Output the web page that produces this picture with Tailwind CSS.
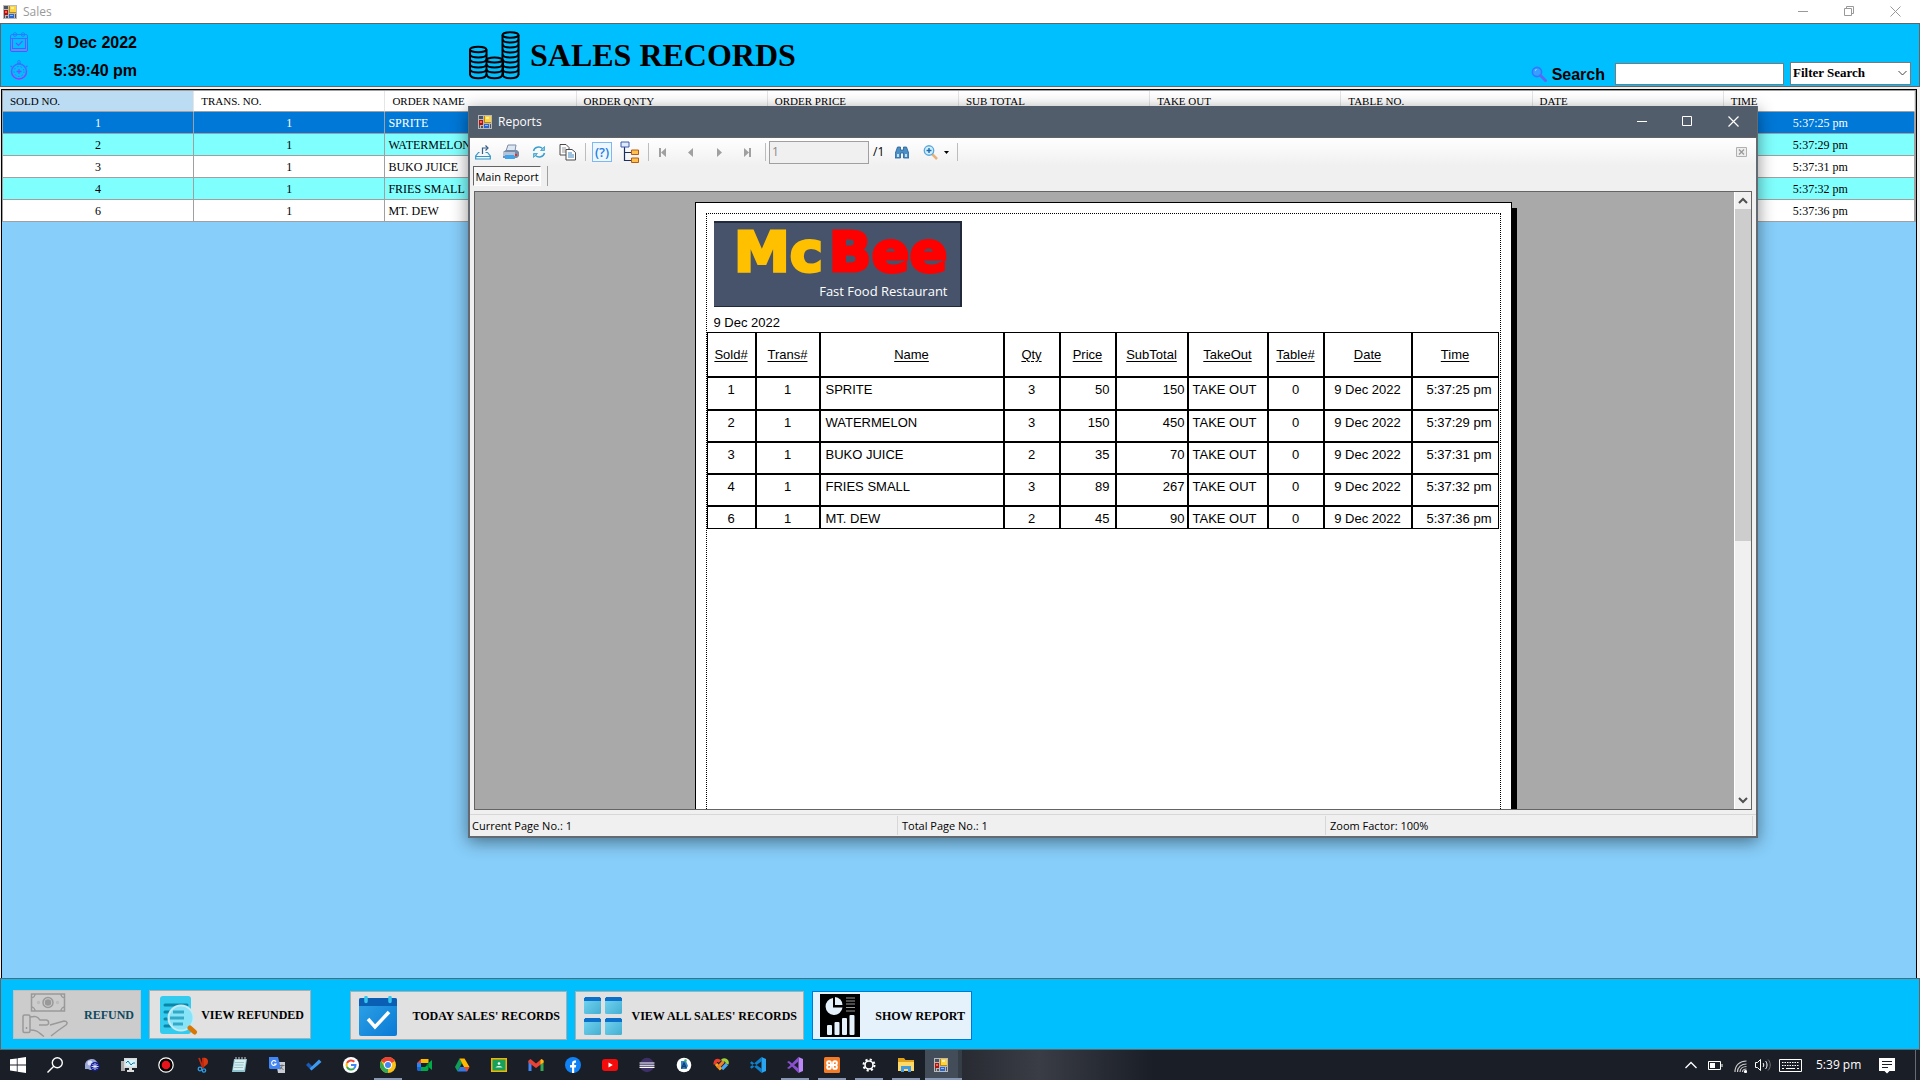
<!DOCTYPE html>
<html lang="en">
<head>
<meta charset="utf-8">
<title>Sales</title>
<script src="https://cdn.jsdelivr.net/npm/@tailwindcss/browser@4"></script>
</head>
<body class="relative flex h-screen flex-col overflow-hidden bg-[#f0f0f0] font-['Open_Sans',sans-serif] text-black">

<svg class="hidden" aria-hidden="true">
  <symbol id="form-icon" viewBox="0 0 14 14">
    <path d="M0 0h14v14H0z" fill="#b9b9b9"/>
    <path d="M1 1h4v3H1zM1 10h1v3H1zM3 11h2v2H3zM12 9h1v4h-1z" fill="#4c5462"/>
    <path d="M6 1h7v7H6z" fill="#b88a0c"/><path d="M7 1h6v6H7z" fill="#ffd33e"/><path d="M8 2h3v2H8z" fill="#fff0a8"/>
    <path d="M1 5h4v5H1z" fill="#b3130c"/><path d="M2 6h2v2H2z" fill="#f0685b"/>
    <path d="M6 9h5v4H6z" fill="#2b66d0"/><path d="M7 10h3v1H7z" fill="#8db9ff"/>
  </symbol>
</svg>

<!-- Window title bar -->
<div class="flex h-[23px] shrink-0 items-center bg-white pl-[3px] pr-0.5">
  <svg class="size-3.5"><use href="#form-icon"/></svg>
  <span class="flex-1 pl-1.5 text-[12px] leading-4 text-[#999]">Sales</span>
  <div class="flex text-[#999]">
    <button class="flex w-[46px] justify-center" aria-label="Minimize"><svg class="size-[11px]" fill="none" stroke="currentColor"><path d="M0 5.5h10"/></svg></button>
    <button class="flex w-[46px] justify-center" aria-label="Restore"><svg class="size-[11px]" fill="none" stroke="currentColor"><path d="M.5 2.500h7v7h-7zM2.500 2.500v-2h7v7h-2"/></svg></button>
    <button class="flex w-[46px] justify-center" aria-label="Close"><svg class="size-[11px]" fill="none" stroke="currentColor"><path d="M.5.5l10 10M10.500.5l-10 10"/></svg></button>
  </div>
</div>

<!-- Header -->
<header class="flex h-16 shrink-0 border border-[#646464] bg-[#00bfff]">
  <div class="grid w-[136px] shrink-0 grid-cols-[18px_1fr] grid-rows-[22px_20px] content-start gap-y-1.5 pl-[9px] pt-2 font-['Liberation_Sans',sans-serif] text-[16px] font-bold leading-[22px]">
    <svg class="h-5 w-[18px]" viewBox="0 0 18 20" fill="none"><defs><linearGradient id="g1" gradientUnits="userSpaceOnUse" x1="0" y1="0" x2="0" y2="20"><stop stop-color="#1a86ff"/><stop offset="1" stop-color="#9a33ff"/></linearGradient></defs><g stroke="url(#g1)"><rect x=".5" y="2.500" width="17" height="17" rx="1.500"/><path d="M1 6.500h16M2 16.500h14"/><rect x="2.500" y="6.500" width="13" height="10"/><circle cx="5" cy="2.500" r="1.800"/><circle cx="13" cy="2.500" r="1.800"/><path d="M6 11l2.500 2.500L12.500 9" stroke-width="1.200"/></g></svg>
    <span class="text-right">9 Dec 2022</span>
    <svg class="h-5 w-[18px]" viewBox="0 0 18 20" fill="none"><g stroke="url(#g1)"><circle cx="9" cy="11.500" r="7.500" stroke-width="1.500"/><circle cx="9" cy="11.500" r="5" stroke-dasharray="1.500 2"/><circle cx="9" cy="1.800" r="1.300"/><path d="M7 3.500h4M9 9v5M6.500 11.500h5M16 7l1.500-1.200M2 7L.5 5.800" stroke-width="1.300"/></g></svg>
    <span class="text-right">5:39:40 pm</span>
  </div>
  <div class="flex items-start pl-[332px] pt-[7px]">
    <svg class="h-[49px] w-[51px]" viewBox="0 0 51 49" fill="none" stroke="#000" stroke-width="2">
      <path d="M1 18.500v25.500M17.500 18.500V44M17.500 29V44M34 29V44M33.500 4v40M49.500 4v40"/>
      <ellipse cx="9.200" cy="18.500" rx="8.200" ry="2.800"/><path d="M1 23.500c1 4 15.500 4 16.500 0M1 28.500c1 4 15.500 4 16.500 0M1 33.500c1 4 15.500 4 16.500 0M1 38.500c1 4 15.500 4 16.500 0M1 43.500c1 5 15.500 5 16.500 0"/>
      <ellipse cx="25.500" cy="29" rx="8" ry="2.500"/><path d="M17.500 33.500c1 4 15 4 16 0M17.500 38.500c1 4 15 4 16 0M17.500 43.500c1 5 15 5 16 0"/>
      <ellipse cx="41.500" cy="4" rx="8" ry="2.800"/><path d="M33.500 8.500c1 4 15 4 16 0M33.500 13.500c1 4 15 4 16 0M33.500 18.500c1 4 15 4 16 0M33.500 23.500c1 4 15 4 16 0M33.500 28.500c1 4 15 4 16 0M33.500 33.500c1 4 15 4 16 0M33.500 38.500c1 4 15 4 16 0M33.500 43.500c1 5 15 5 16 0"/>
    </svg>
    <h1 class="whitespace-nowrap pl-2.5 pt-1 font-['Liberation_Serif',serif] text-[32px] font-bold leading-10">SALES RECORDS</h1>
  </div>
  <div class="ml-auto flex items-end pb-px pr-2">
    <svg class="mb-[3px] mr-[5px] size-4" viewBox="0 0 16 16" fill="none"><circle cx="6" cy="6" r="4.600" fill="#35a0ff" stroke="#2f78ff" stroke-width="1.600"/><path d="M4 4.500l1.500-1" stroke="#bfe6ff"/><path d="M9.500 9.500l5 5" stroke="#5a68f5" stroke-width="3" stroke-linecap="round"/></svg>
    <label for="search" class="mr-2.5 font-['Liberation_Sans',sans-serif] text-[16px] font-bold leading-5">Search</label>
    <input id="search" type="text" class="mr-1.5 h-[22px] w-[169px] border border-[#7a7a7a] bg-white px-1 text-xs">
    <div class="relative">
      <select aria-label="Filter Search" class="block h-[23px] w-[121px] appearance-none border border-[#7a7a7a] bg-white pb-0.5 pl-0.5 font-['Liberation_Serif',serif] text-[13px] font-bold leading-4"><option>Filter Search</option></select>
      <svg class="pointer-events-none absolute right-1 top-2 h-[7px] w-[9px]" fill="none" stroke="#444"><path d="M.5 1l4 4 4-4"/></svg>
    </div>
  </div>
</header>

<!-- Sales grid -->
<main class="ml-px mr-[3px] mt-0.5 flex-1 border-x border-t border-black bg-[#87cefa]">
  <table class="w-full table-fixed border-separate border-spacing-0 whitespace-nowrap border border-b-0 border-[#a0a0a0] font-['Liberation_Serif',serif] text-[12px] leading-4 [&_td]:h-[22px] [&_td]:border-b [&_td]:border-r [&_td]:border-[#a0a0a0] [&_td]:p-0 [&_td]:pl-[3px] [&_td:nth-child(-n+2)]:pl-0 [&_td:nth-child(-n+2)]:text-center [&_td:last-child]:text-center [&_th]:h-[21px] [&_th]:border-b [&_th]:border-r [&_th]:border-b-[#a0a0a0] [&_th]:border-r-[#e5e5e5] [&_th]:p-0 [&_th]:pl-[7px] [&_th]:text-left [&_th]:text-[11px] [&_th]:font-normal">
    <thead><tr class="bg-white"><th class="bg-[#bcdcf4]">SOLD NO.</th><th>TRANS. NO.</th><th>ORDER NAME</th><th>ORDER QNTY</th><th>ORDER PRICE</th><th>SUB TOTAL</th><th>TAKE OUT</th><th>TABLE NO.</th><th>DATE</th><th>TIME</th></tr></thead>
    <tbody>
      <tr class="bg-[#0078d7] text-white"><td>1</td><td>1</td><td>SPRITE</td><td>3</td><td>50</td><td>150</td><td>TAKE OUT</td><td>0</td><td>9 Dec 2022</td><td>5:37:25 pm</td></tr>
      <tr class="bg-[#80ffff]"><td>2</td><td>1</td><td>WATERMELON</td><td>3</td><td>150</td><td>450</td><td>TAKE OUT</td><td>0</td><td>9 Dec 2022</td><td>5:37:29 pm</td></tr>
      <tr class="bg-white"><td>3</td><td>1</td><td>BUKO JUICE</td><td>2</td><td>35</td><td>70</td><td>TAKE OUT</td><td>0</td><td>9 Dec 2022</td><td>5:37:31 pm</td></tr>
      <tr class="bg-[#80ffff]"><td>4</td><td>1</td><td>FRIES SMALL</td><td>3</td><td>89</td><td>267</td><td>TAKE OUT</td><td>0</td><td>9 Dec 2022</td><td>5:37:32 pm</td></tr>
      <tr class="bg-white"><td>6</td><td>1</td><td>MT. DEW</td><td>2</td><td>45</td><td>90</td><td>TAKE OUT</td><td>0</td><td>9 Dec 2022</td><td>5:37:36 pm</td></tr>
    </tbody>
  </table>
</main>

<!-- Action buttons -->
<footer class="flex h-[72px] shrink-0 items-start border border-[#646464] bg-[#00bfff] pl-3 pt-[11px] font-['Liberation_Serif',serif] text-[12px] font-bold leading-4">
  <button disabled class="mr-2 flex h-[49px] w-32 items-center justify-between border border-[#bfbfbf] bg-[#ccc] pl-2 pr-1.5 text-[#0d4a60]">
    <svg class="h-11 w-[46px]" viewBox="0 0 46 44" fill="none" stroke="#999" stroke-width="1.500"><path d="M9.500 1h33v17h-33zM9 5a4 4 0 004-4M43 5a4 4 0 01-4-4M9 14a4 4 0 014 4M43 14a4 4 0 00-4 4" /><circle cx="26" cy="9.500" r="5"/><circle cx="26" cy="9.500" r="2.500" fill="#999"/><circle cx="16.500" cy="9.500" r="1" fill="#bbb" stroke="#bbb"/><circle cx="35.500" cy="9.500" r="1" fill="#bbb" stroke="#bbb"/><rect x="1" y="22" width="7" height="17.500" rx="1.500"/><path d="M4.500 34v2M8 24c5-1 7-1 10 3h6c3 0 4 5 0 5h-7M28 32l14-4c3 0 4 2 2 4-6 4-10 7-15 11M8 37c8 0 9 3 14 6.500"/></svg>
    <span>REFUND</span>
  </button>
  <button class="mr-[39px] flex h-[49px] w-[162px] items-center justify-between border border-[#adadad] bg-[#e1e1e1] pl-2.5 pr-1.5">
    <svg class="h-11 w-[38px]" viewBox="0 0 38 44"><path d="M3 3h25a3 3 0 013 3v32a3 3 0 01-3 3H3a3 3 0 01-3-3V6a3 3 0 013-3z" fill="#33cbee"/><path d="M5 12h22M5 19h20M5 26h16M5 33h14" stroke="#0b86a8" stroke-width="3" stroke-linecap="round"/><circle cx="21" cy="25" r="12.500" fill="#86e3f8" stroke="#c7eaf3" stroke-width="2"/><path d="M13 19h11M10 25h14M13 31h10" stroke="#33a9c6" stroke-width="3"/><path d="M30 35l4.500 4" stroke="#d97706" stroke-width="5" stroke-linecap="round"/></svg>
    <span>VIEW REFUNDED</span>
  </button>
  <button class="mr-2 mt-px flex h-[49px] w-[217px] items-center justify-between border border-[#adadad] bg-[#e1e1e1] pl-2 pr-1.5">
    <svg class="h-10 w-[38px]" viewBox="0 0 38 40"><defs><linearGradient id="g2" x2="1" y2="1"><stop stop-color="#2ea3e6"/><stop offset="1" stop-color="#0a7ad6"/></linearGradient></defs><rect y="2" width="38" height="38" rx="2" fill="url(#g2)"/><path d="M0 10V4a2 2 0 012-2h34a2 2 0 012 2v6z" fill="#0a5fb5"/><path d="M7 1.500v4M31 1.500v4" stroke="#35c6ee" stroke-width="3.500" stroke-linecap="round"/><path d="M9 23l7 8 14-15" fill="none" stroke="#fff" stroke-width="3.500"/></svg>
    <span>TODAY SALES' RECORDS</span>
  </button>
  <button class="mr-2 mt-px flex h-[49px] w-[229px] items-center justify-between border border-[#adadad] bg-[#e1e1e1] pl-2 pr-1.5">
    <svg class="size-[38px]" viewBox="0 0 38 38"><defs><linearGradient id="g3" x2="1" y2="1"><stop stop-color="#74d6f2"/><stop offset="1" stop-color="#44aed2"/></linearGradient></defs><g fill="url(#g3)"><rect width="17" height="17" rx="1.500"/><rect x="21" width="17" height="17" rx="1.500"/><rect y="21" width="17" height="17" rx="1.500"/><rect x="21" y="21" width="17" height="17" rx="1.500"/></g><path d="M0 4V1h1V0h15v1h1v3zM21 4V1h1V0h15v1h1v3zM0 25v-3h1v-1h15v1h1v3zM21 25v-3h1v-1h15v1h1v3z" fill="#0b70c9"/></svg>
    <span>VIEW ALL SALES' RECORDS</span>
  </button>
  <button class="mt-px flex h-[49px] w-40 items-center justify-between border border-[#0078d7] bg-[#e5f1fb] pl-[7px] pr-1.5">
    <svg class="h-[43px] w-10" viewBox="0 0 40 43"><path d="M0 0h40v43H0z"/><path d="M13 4a8.500 8.500 0 109.500 9.500H13z" fill="#e5f1fb"/><path d="M15 3a8 8 0 017.500 8H15z" fill="#e5f1fb"/><path d="M26 4h9M26 7h9M26 10h9M26 13.500h9M26 17h9" stroke="#999" stroke-width="1"/><rect x="7" y="31" width="5" height="10" rx="1" fill="#e5f1fb"/><rect x="14.500" y="28" width="5" height="13" rx="1" fill="#e5f1fb"/><rect x="22" y="24" width="5" height="17" rx="1" fill="#e5f1fb"/><rect x="29.500" y="21" width="5" height="20" rx="1" fill="#e5f1fb"/></svg>
    <span>SHOW REPORT</span>
  </button>
</footer>

<!-- Taskbar -->
<nav class="flex h-[30px] shrink-0 items-stretch bg-[#1a1e27] text-white [&_button]:flex [&_button]:w-[37px] [&_button]:items-center [&_button]:justify-center [&_button]:pr-0.5 [&_svg]:block">
  <button aria-label="Start"><svg class="size-4" viewBox="0 0 16 16" fill="#fff"><path d="M0 2.300l6.800-.9v6.100H0zM7.600 1.300L16 .1v7.400H7.600zM0 8.400h6.800v6.100L0 13.600zM7.600 8.400H16v7.500l-8.400-1.200z"/></svg></button>
  <button aria-label="Search"><svg class="size-4" viewBox="0 0 16 16" fill="none" stroke="#fff" stroke-width="1.400"><circle cx="10.300" cy="5.700" r="5"/><path d="M6.800 9.200L.5 15.500"/></svg></button>
  <button aria-label="Paint"><svg class="size-4" viewBox="0 0 16 16"><path d="M1 8c0-4 4-6 7-6s5 2 6 5v6H6L4 12H1z" fill="#9aa7d8"/><circle cx="6" cy="6" r="2.500" fill="#dfe5fb"/><circle cx="11" cy="9.500" r="4.500" fill="#16209a"/><path d="M11 6v7M7.500 9.500h7M8.500 7l5 5M13.500 7l-5 5" stroke="#e8edff" stroke-width=".9"/></svg></button>
  <button aria-label="Monitor"><svg class="size-4" viewBox="0 0 16 16"><path d="M0 4h4v10H0z" fill="#aaa"/><path d="M3 1h13v10H3z" fill="#d9d9d9"/><path d="M4.500 2.500h10v7h-10z" fill="#d8f4fb"/><path d="M5 6l2-2 3 4 2-2h2" stroke="#1476a8" fill="none"/><path d="M8 11h3v2h2v2H6v-2h2z" fill="#ddd"/></svg></button>
  <button aria-label="Recorder"><svg class="size-4" viewBox="0 0 16 16"><circle cx="8" cy="8" r="7.200" fill="#000" stroke="#fff" stroke-width="1.200"/><circle cx="8" cy="8" r="4.300" fill="#e8131b"/></svg></button>
  <button aria-label="Snipping Tool"><svg class="size-4" viewBox="0 0 16 16" fill="none"><path d="M7 1c5-1 7 2 5.500 6L9 10z" fill="#d63a12"/><path d="M4 1l4 10M8 1v10" stroke="#c8280e" stroke-width="1.800"/><circle cx="5" cy="12" r="1.800" stroke="#2b9be0" stroke-width="1.300"/><circle cx="9" cy="13.500" r="1.700" stroke="#2b9be0" stroke-width="1.300"/></svg></button>
  <button aria-label="Notepad"><svg class="size-4" viewBox="0 0 16 16"><path d="M2 2h13l-2 13H0z" fill="#8fc3cf"/><path d="M3 3h11l-2 10H1z" fill="#d4eff2"/><path d="M3 5.500h9M2.500 8h9M2 10.500h9" stroke="#8fb6bd" stroke-width=".8"/><path d="M4 0v3M7 0v3M10 0v3M13 0v3" stroke="#ccc"/></svg></button>
  <button aria-label="Translate"><svg class="size-4" viewBox="0 0 16 16"><path d="M7 5h9v11H9z" fill="#c9ccd1"/><path d="M0 0h9l3 12H1L0 11z" fill="#4285f4"/><path d="M7 4.600A2.400 2.400 0 107.200 7H5" fill="none" stroke="#fff" stroke-width="1.100"/><path d="M10.500 8.500h5M13 7.500v1c0 2-1 3-2 4M11.500 10l3 3" stroke="#63666b" fill="none" stroke-width=".9"/></svg></button>
  <button aria-label="To Do"><svg class="size-4" viewBox="0 0 16 16"><path d="M0 8l2.500-2.500L7.500 10.500 5.500 13.500z" fill="#195ab6"/><path d="M5.500 13.500L3.700 11.500 13 2.500 15.500 5z" fill="#3e9af0"/></svg></button>
  <button aria-label="Google"><svg class="size-4" viewBox="0 0 16 16" fill="none" stroke-width="2"><circle cx="8" cy="8" r="8" fill="#fff"/><path d="M4 6a4.500 4.500 0 017.300-1.200" stroke="#ea4335"/><path d="M4 10a4.500 4.500 0 010-4" stroke="#fbbc05"/><path d="M4 10a4.500 4.500 0 007 1.500" stroke="#34a853"/><path d="M11 11.500A4.500 4.500 0 0012.500 8H8" stroke="#4285f4"/></svg></button>
  <button aria-label="Chrome" class="relative"><svg class="size-4" viewBox="0 0 16 16"><circle cx="8" cy="8" r="8" fill="#fbc116"/><path d="M8 8L1.070 4a8 8 0 0113.860 0z" fill="#ea4335"/><path d="M8 8v8A8 8 0 011.070 4L4.500 10z" fill="#34a853"/><circle cx="8" cy="8" r="3.900" fill="#fff"/><circle cx="8" cy="8" r="3" fill="#4285f4"/></svg><i class="absolute bottom-0 left-1 h-0.5 w-7 bg-[#8797b5]"></i></button>
  <button aria-label="Meet"><svg class="size-4" viewBox="0 0 16 16"><path d="M0 6l4-4v4z" fill="#ea4335"/><path d="M4 2h7.500v4H4z" fill="#fbbc04"/><path d="M0 6h4v4H0z" fill="#2684fc"/><path d="M0 10h4v4H1l-1-1z" fill="#1a63d0"/><path d="M4 10h4l3.500-3v5.500L10.500 14H4z" fill="#00ac47"/><path d="M9 8l2.500-2v4z" fill="#00832d"/><path d="M11.500 6L15 3v10l-3.500-3z" fill="#00ac47"/></svg></button>
  <button aria-label="Drive"><svg class="size-4" viewBox="0 0 16 16"><path d="M5.500 1.500L1 10l2.500 4.500L8 6z" fill="#0f9d58"/><path d="M5.500 1.500h5L15.500 10H10z" fill="#ffba00"/><path d="M3.500 14.500h9.500L15.500 10H6z" fill="#3777e3"/><path d="M10 10h5.500L13 14.500z" fill="#ea4335"/></svg></button>
  <button aria-label="Classroom"><svg class="size-4" viewBox="0 0 16 16"><path d="M0 1h16v14H0z" fill="#f4b400"/><path d="M1.500 2.500h13v11h-13z" fill="#16a05c"/><circle cx="8" cy="6.500" r="1.300" fill="#fff"/><path d="M4.500 10.500c1-2 6-2 7 0z" fill="#d8f3e3"/></svg></button>
  <button aria-label="Gmail"><svg class="size-4" viewBox="0 0 16 16"><path d="M.5 4h3v10h-3z" fill="#4285f4"/><path d="M12.500 4h3v10h-3z" fill="#34a853"/><path d="M.5 5.500V3.500L2.500 2 8 6.500 13.500 2l2 1.500v2L8 11z" fill="#ea4335"/><path d="M12.500 3l1-1 2 1.500v2l-3 2z" fill="#fbbc04"/></svg></button>
  <button aria-label="Facebook"><svg class="size-4" viewBox="0 0 16 16"><circle cx="8" cy="8" r="8" fill="#1082f5"/><path d="M7 16v-5.500H5V8h2V6.500C7 4 8.500 3.200 11 3.600v2.200C9.500 5.700 9.200 6 9.200 7v1h2l-.4 2.500H9.200V16z" fill="#fff"/></svg></button>
  <button aria-label="YouTube"><svg class="size-4" viewBox="0 0 16 16"><rect y="2" width="16" height="12" rx="3" fill="#f40b0b"/><path d="M6.500 5.500v5L10.800 8z" fill="#fff"/></svg></button>
  <button aria-label="Eclipse"><svg class="size-4" viewBox="0 0 16 16"><circle cx="8" cy="8" r="7.200" fill="#3d3066"/><path d="M.5 6h15M.5 8.200h15M.5 10.400h15" stroke="#fff" stroke-width="1.100"/></svg></button>
  <button aria-label="Android Studio"><svg class="size-4" viewBox="0 0 16 16"><circle cx="8" cy="8" r="7.300" fill="#fff"/><path d="M5 4h5l2 5-2 3H5z" fill="#3587c9"/><path d="M5.500 11.500l2.500-5.500 2.500 5.500M6.500 9.500h3" stroke="#123f70" stroke-width="1.300" fill="none"/><circle cx="9.500" cy="3.500" r="1.300" fill="#47b36a"/></svg></button>
  <button aria-label="Power Tools"><svg class="size-4" viewBox="0 0 16 16" fill="none" stroke-width="3.200"><path d="M2 7.500C2 3 5 2.500 7 4.500" stroke="#ee3b2b"/><path d="M9 4c3-2.500 6 0 5 3" stroke="#9fd03a"/><path d="M3 7l5 5.500" stroke="#f5a81c"/><path d="M9 12l5-5" stroke="#47a7ef"/><path d="M4.500 11l6-6.500" stroke="#f07f2a"/></svg></button>
  <button aria-label="VS Code"><svg class="size-4" viewBox="0 0 16 16"><path d="M11.500 0L16 2v12l-4.500 2z" fill="#29a4f0"/><path d="M11.500 0L0 10l1.500 1.700L12 4zM11.500 16L0 6l1.500-1.700L12 12z" fill="#0d7fcb"/></svg></button>
  <button aria-label="Visual Studio" class="relative"><svg class="size-4" viewBox="0 0 16 16"><path d="M11.500 0L16 2v12l-4.500 2z" fill="#bb86f5"/><path d="M11.500 0L2 9.500 0 11V5l2 1.500L11.500 16v-4.500L2 4 0 5v6l2 1 9.500-7.500z" fill="#8a4fd0"/></svg><i class="absolute bottom-0 left-1 h-0.5 w-7 bg-[#8797b5]"></i></button>
  <button aria-label="XAMPP" class="relative"><svg class="size-4" viewBox="0 0 16 16"><rect width="16" height="16" rx="1.500" fill="#f47b26"/><path d="M8 8H5a1.900 1.900 0 111.900-1.900v3.800A1.900 1.900 0 115 8M8 8h3a1.900 1.900 0 10-1.900-1.900v3.800A1.900 1.900 0 1011 8" fill="none" stroke="#fff" stroke-width="1.900"/></svg><i class="absolute bottom-0 left-1 h-0.5 w-7 bg-[#8797b5]"></i></button>
  <button aria-label="Settings" class="relative"><svg class="size-4" viewBox="0 0 16 16" fill="none" stroke="#fff"><circle cx="8" cy="8" r="4" stroke-width="1.600"/><circle cx="8" cy="8" r="5.500" stroke-width="2" stroke-dasharray="2.160 2.160"/></svg><i class="absolute bottom-0 left-1 h-0.5 w-7 bg-[#8797b5]"></i></button>
  <button aria-label="File Explorer" class="relative"><svg class="size-4" viewBox="0 0 16 16"><path d="M0 1h6l1.500 2H16v5H0z" fill="#e0a21a"/><path d="M0 5h16v9H0z" fill="#ffd866"/><path d="M3 9h10v6h-3v-3H6v3H3z" fill="#3f9be6"/></svg><i class="absolute bottom-0 left-1 h-0.5 w-7 bg-[#8797b5]"></i></button>
  <div class="flex flex-1 bg-linear-to-r from-[#1f2229] via-[#3a3d45] via-15% to-[#1a1e27] to-30%">
    <button aria-label="Sales" class="relative border-r-4 border-[#353d47] bg-[#424d59]"><svg class="size-3.5"><use href="#form-icon"/></svg><i class="absolute bottom-0 left-0 h-0.5 w-[37px] bg-[#8797b5]"></i></button>
  </div>
  <div class="flex items-center text-[12px] leading-4">
    <svg class="mr-[11px] h-2 w-3" fill="none" stroke="#fff" stroke-width="1.300"><path d="M.5 7L6 1.500 11.500 7"/></svg>
    <svg class="mr-[11px] h-[9px] w-[15px]" fill="none" stroke="#fff"><path d="M.5.5h12v8H.5zM14 3v3"/><path d="M2 2h5v5H2z" fill="#fff" stroke="none"/></svg>
    <svg class="mr-2 mt-0.5 size-[13px]" viewBox="0 0 13 13" fill="none" stroke="#ccc" stroke-width="1.200"><path d="M1 12C1 5 6 1 12.500 1M3.500 12c0-5 4-8 9-8M6 12c0-3.500 3-5.500 6.500-5.500M8.500 12c0-2 2-3 4-3"/><circle cx="11.500" cy="11.500" r="1" fill="#fff" stroke="#fff"/></svg>
    <svg class="mr-2 h-3.5 w-4" viewBox="0 0 16 14" fill="none" stroke="#fff"><path d="M.5 4.500h2l3-3v11l-3-3h-2zM8 5c1 1 1 3 0 4M10.500 3c2 2 2 6 0 8"/><path d="M13 1.500c3 3 3 8 0 11" stroke="#777"/></svg>
    <svg class="mr-3.5 h-[13px] w-[23px]" viewBox="0 0 23 13" fill="none" stroke="#fff"><path d="M.5.500h22v12H.5z"/><path d="M3 3.500h17M3 6.500h17" stroke-dasharray="1.500 1"/><path d="M3 9.500h2M7 9.500h9M18 9.500h2"/></svg>
    <span class="w-[42px] whitespace-nowrap">5:39 pm</span>
    <svg class="ml-[21px] mr-5 mt-px h-4 w-4" viewBox="0 0 16 16" fill="#fff"><path d="M0 0h16v13h-5.500L8 15.500 5.500 13H0z"/><path d="M3 3.500h10M3 6.500h10M3 9.500h6" stroke="#1a1e27"/></svg>
    <i class="h-full w-[5px] border-l border-[#666b74]"></i>
  </div>
</nav>

<!-- Reports window -->
<section class="absolute left-[468px] top-[106px] flex h-[732px] w-[1290px] flex-col border-2 border-t-0 border-[#646a72] bg-[#f0f0f0] text-[11px] leading-4 shadow-[0_4px_16px_rgba(0,0,0,0.45)]">
  <div class="-mx-px flex h-8 shrink-0 items-center border-b border-[#646464] bg-[#525d6b] pl-[9px] text-white">
    <svg class="size-3.5"><use href="#form-icon"/></svg>
    <span class="flex-1 pl-1.5 text-[12px]">Reports</span>
    <button class="flex w-[45px] justify-center" aria-label="Minimize"><svg class="size-[11px]" fill="none" stroke="currentColor"><path d="M0 5.500h10"/></svg></button>
    <button class="flex w-[45px] justify-center" aria-label="Maximize"><svg class="size-[11px]" fill="none" stroke="currentColor"><path d="M.5.500h9v9h-9z"/></svg></button>
    <button class="flex w-[47px] justify-center" aria-label="Close"><svg class="size-[11px]" fill="none" stroke="currentColor" stroke-width="1.200"><path d="M.5.500l10 10M10.500.500l-10 10"/></svg></button>
  </div>
  <div class="flex h-7 shrink-0 items-center bg-linear-to-b from-white to-[#f0f0f0] [&_button]:flex [&_button]:w-7 [&_button]:justify-center [&_button]:pr-0.5">
    <button aria-label="Export"><svg class="size-4" viewBox="0 0 16 16" fill="none" stroke="#2f96cc" stroke-width="1.200"><path d="M4.500 8.500h-1L.700 12v3h14.600v-3l-2.800-3.500h-2M.700 12.500h14.600"/><path d="M7.500 10V4H12" stroke="#355f86"/><path d="M10.500 1.500L13 4l-2.500 2.500" stroke="#355f86"/></svg></button>
    <button aria-label="Print"><svg class="size-4" viewBox="0 0 16 16"><path d="M5 1h8l-1 6H3z" fill="#dde6f3" stroke="#7c8da5"/><path d="M0 8l3-2h11l2 2v4l-2 2H0z" fill="#7a8ba6"/><path d="M0 8h12v4H0z" fill="#b6c3d6"/><path d="M2 11h9l1 4H2z" fill="#3fa4ef"/><path d="M12 10h2v2h-2z" fill="#e03030"/></svg></button>
    <button aria-label="Refresh"><svg class="size-3.5" viewBox="0 0 14 14" fill="none" stroke="#3a9fcd" stroke-width="1.500"><path d="M1.500 6c1-4 6-5 9-2.500M12.500 8c-1 4-6 5-9 2.500"/><path d="M12.500 1.500v4H8.500zM1.500 12.500v-4H5.500z" fill="#7cc9e8" stroke="#3a9fcd" stroke-width=".8"/></svg></button>
    <button aria-label="Copy"><svg class="size-[17px]" viewBox="0 0 17 17" fill="#fff" stroke="#4a4a4a"><path d="M1 .5h6l3 3V11H1z"/><path d="M3 4h4M3 6h5M3 8h5" stroke="#999"/><path d="M7 5.500h6l3.500 3V16H7z"/><path d="M9 9h4M9 11h6M9 13h6" stroke="#3f85bd"/></svg></button>
    <i class="mx-[3px] h-[18px] w-px bg-[#bdbdbd]"></i>
    <button aria-label="Help"><span class="flex size-5 items-center justify-center border border-[#7db9f0] bg-[#eef6ff] text-[13px] font-semibold leading-4 text-[#1e7fe0]">(?)</span></button>
    <button aria-label="Group tree"><svg class="h-[22px] w-5" viewBox="0 0 20 22"><path d="M4.500 6v13.500H11M4.500 11.500H11" stroke="#1d2f5f" fill="none" stroke-width="1.200"/><path d="M1 1h8v5H1z" fill="#dfe9ff" stroke="#3d5ca8"/><path d="M11.500 9h7v4.500h-7zM11.500 17h7v4.500h-7z" fill="#ffc14d" stroke="#b85c14"/></svg></button>
    <i class="ml-[3px] mr-px h-[18px] w-px bg-[#bdbdbd]"></i>
    <button aria-label="First page"><svg class="h-[9px] w-2" fill="#a0a0a0"><path d="M0 0h2v9H0zM7 0v9L2 4.500z"/></svg></button>
    <button aria-label="Previous page"><svg class="h-[9px] w-2" fill="#a0a0a0"><path d="M6 0v9L1 4.500z"/></svg></button>
    <button aria-label="Next page"><svg class="h-[9px] w-2" fill="#a0a0a0"><path d="M2 0v9l5-4.500z"/></svg></button>
    <button aria-label="Last page"><svg class="h-[9px] w-2" fill="#a0a0a0"><path d="M6 0h2v9H6zM1 0v9l5-4.500z"/></svg></button>
    <i class="mx-[3px] h-[18px] w-px bg-[#bdbdbd]"></i>
    <input type="text" value="1" aria-label="Page number" disabled class="h-[23px] w-[100px] border border-[#a0a0a0] bg-[#f0f0f0] px-0.5 pb-0.5 text-[12px] text-[#8a8a8a]">
    <span class="w-5 pl-1 text-[12px]">/1</span>
    <button aria-label="Find"><svg class="size-3.5" viewBox="0 0 14 14"><path d="M2.500 2h3v3H8.500V2h3l2.500 7v4H8.500V8h-3v5H0V9z" fill="#4b8fc4" stroke="#255f95" stroke-width=".8"/><path d="M2 9h2v3H2zM10 9h2v3h-2z" fill="#bfe0f5"/></svg></button>
    <button aria-label="Zoom"><svg class="size-[15px]" viewBox="0 0 15 15" fill="none"><path d="M9 9l5 5" stroke="#e8b27a" stroke-width="2.500"/><circle cx="6" cy="5.500" r="4.700" fill="#d4f0ff" stroke="#5aa9dc" stroke-width="1.400"/><path d="M3.500 5.500h5M6 3v5" stroke="#1b6bb0" stroke-width="1.400"/></svg></button>
    <svg class="-ml-px mr-2 h-[3px] w-[5px]"><path d="M0 0h5L2.500 3z"/></svg>
    <i class="h-[18px] w-px bg-[#bdbdbd]"></i>
    <button aria-label="Close view" class="ml-auto"><svg class="size-[11px]" fill="#eee" stroke="#b0b0b0"><path d="M.5.500h10v9H.5z"/><path d="M3 2.500l5 5M8 2.500l-5 5" stroke="#999" stroke-width="1.300"/></svg></button>
  </div>
  <div class="flex h-[25px] shrink-0 items-start pl-[3px]">
    <button class="h-5 w-[68px] whitespace-nowrap border border-b-white border-l-[#646464] border-r-white border-t-[#646464] bg-[#f8f8f8] pt-0.5 text-center">Main Report</button>
    <i class="ml-1.5 h-5 w-px bg-[#a0a0a0]"></i>
  </div>

  <!-- Report viewer -->
  <div class="mx-1 flex min-h-0 flex-1 overflow-hidden border border-[#646464] bg-[#a9a9a9]">
    <div class="flex flex-1 justify-center overflow-hidden pt-2.5">
      <div class="mr-[3px] h-[900px] w-[817px] shrink-0 border border-black bg-white px-2.5 pt-2.5 shadow-[5px_6px_0_#000]">
        <div class="h-[880px] border border-dotted border-black pr-px pt-[7px]">
          <div class="ml-[7px] flex h-[86px] w-[248px] flex-col items-end border-b border-r-2 border-t-2 border-[#202a3c] bg-[#46536b] pr-3">
            <div class="font-['DejaVu_Sans',sans-serif] text-[56px] font-bold leading-[58px]"><span class="mr-1.5 text-[#ffc000] [-webkit-text-stroke:3px_#ffc000]">Mc</span><span class="text-[#ff0000] [-webkit-text-stroke:3px_#ff0000]">Bee</span></div>
            <div class="pt-0.5 text-[13px] leading-4 text-white">Fast Food Restaurant</div>
          </div>
          <div class="pl-[7px] pt-2 font-['Liberation_Sans',sans-serif] text-[13px] leading-4">9 Dec 2022</div>
          <table class="mt-px w-full table-fixed border-separate border-spacing-0 whitespace-nowrap border-l border-t border-black font-['Liberation_Sans',sans-serif] text-[13px] leading-4 [&_td]:h-8 [&_td]:border-b-2 [&_td]:border-r-2 [&_td]:border-black [&_td]:p-0 [&_td]:pt-1 [&_td]:text-center [&_td]:align-top [&_td:last-child]:border-r [&_td:last-child]:pr-1.5 [&_td:last-child]:text-right [&_td:nth-child(3)]:pl-[5px] [&_td:nth-child(3)]:text-left [&_td:nth-child(5)]:pr-[5px] [&_td:nth-child(5)]:text-right [&_td:nth-child(6)]:pr-0.5 [&_td:nth-child(6)]:text-right [&_td:nth-child(7)]:pl-1 [&_td:nth-child(7)]:text-left [&_th]:h-[45px] [&_th]:border-b-2 [&_th]:border-r-2 [&_th]:border-black [&_th]:p-0 [&_th]:font-normal [&_th]:underline [&_th]:underline-offset-2 [&_th:last-child]:border-r [&_tbody_tr:first-child_td]:h-[33px] [&_tbody_tr:last-child_td]:h-[22px] [&_tbody_tr:last-child_td]:border-b">
            <colgroup><col class="w-[49px]"><col class="w-16"><col class="w-[184px]"><col class="w-14"><col class="w-14"><col class="w-[72px]"><col class="w-20"><col class="w-14"><col class="w-[88px]"><col></colgroup>
            <thead><tr><th>Sold#</th><th>Trans#</th><th>Name</th><th>Qty</th><th>Price</th><th>SubTotal</th><th>TakeOut</th><th>Table#</th><th>Date</th><th>Time</th></tr></thead>
            <tbody>
              <tr><td>1</td><td>1</td><td>SPRITE</td><td>3</td><td>50</td><td>150</td><td>TAKE OUT</td><td>0</td><td>9 Dec 2022</td><td>5:37:25 pm</td></tr>
              <tr><td>2</td><td>1</td><td>WATERMELON</td><td>3</td><td>150</td><td>450</td><td>TAKE OUT</td><td>0</td><td>9 Dec 2022</td><td>5:37:29 pm</td></tr>
              <tr><td>3</td><td>1</td><td>BUKO JUICE</td><td>2</td><td>35</td><td>70</td><td>TAKE OUT</td><td>0</td><td>9 Dec 2022</td><td>5:37:31 pm</td></tr>
              <tr><td>4</td><td>1</td><td>FRIES SMALL</td><td>3</td><td>89</td><td>267</td><td>TAKE OUT</td><td>0</td><td>9 Dec 2022</td><td>5:37:32 pm</td></tr>
              <tr><td>6</td><td>1</td><td>MT. DEW</td><td>2</td><td>45</td><td>90</td><td>TAKE OUT</td><td>0</td><td>9 Dec 2022</td><td>5:37:36 pm</td></tr>
            </tbody>
          </table>
        </div>
      </div>
    </div>
    <div class="flex w-[17px] flex-col border-l border-white bg-[#f0f0f0]">
      <svg class="h-[17px] w-4" fill="none" stroke="#505050" stroke-width="2"><path d="M4 11l4-4 4 4"/></svg>
      <div class="h-[332px] bg-[#cdcdcd]"></div>
      <svg class="mt-auto h-[17px] w-4" fill="none" stroke="#505050" stroke-width="2"><path d="M4 6l4 4 4-4"/></svg>
    </div>
  </div>
  <div class="mt-1 flex h-[22px] shrink-0 items-stretch border-t border-[#d7d7d7] py-px pr-[3px] leading-5 [&>div]:border-r [&>div]:border-[#d7d7d7]">
    <div class="w-[428px] pl-0.5">Current Page No.: 1</div>
    <div class="w-[428px] pl-1">Total Page No.: 1</div>
    <div class="flex-1 pl-1">Zoom Factor: 100%</div>
  </div>
</section>
</body>
</html>
